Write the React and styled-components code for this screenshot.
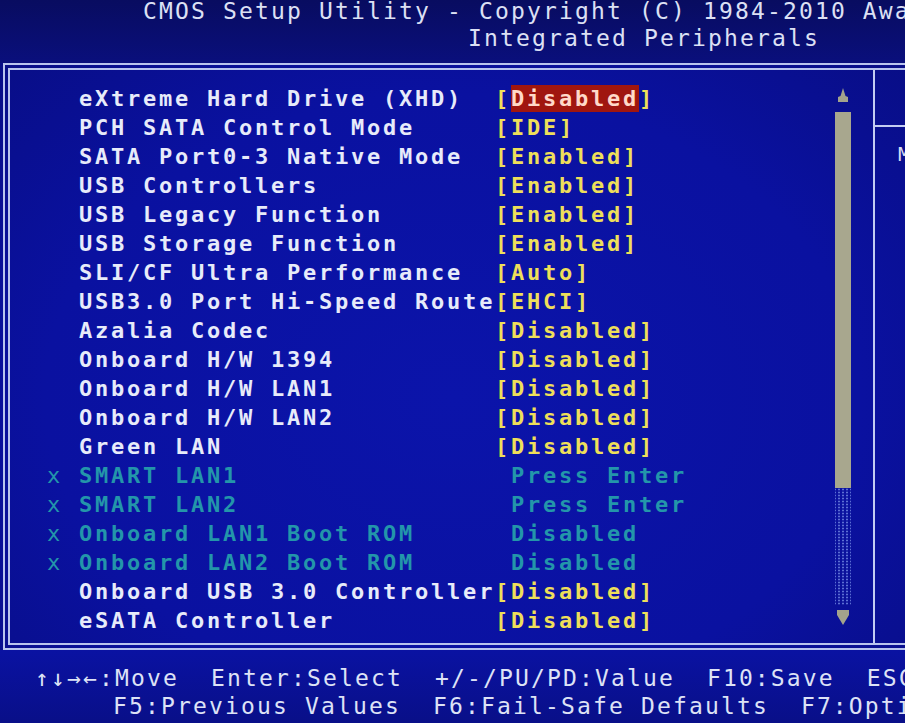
import React from 'react'
import styled, { createGlobalStyle } from 'styled-components'

const rows = [
  { label: 'eXtreme Hard Drive (XHD)', value: 'Disabled', selected: true },
  { label: 'PCH SATA Control Mode', value: 'IDE' },
  { label: 'SATA Port0-3 Native Mode', value: 'Enabled' },
  { label: 'USB Controllers', value: 'Enabled' },
  { label: 'USB Legacy Function', value: 'Enabled' },
  { label: 'USB Storage Function', value: 'Enabled' },
  { label: 'SLI/CF Ultra Performance', value: 'Auto' },
  { label: 'USB3.0 Port Hi-Speed Route', value: 'EHCI' },
  { label: 'Azalia Codec', value: 'Disabled' },
  { label: 'Onboard H/W 1394', value: 'Disabled' },
  { label: 'Onboard H/W LAN1', value: 'Disabled' },
  { label: 'Onboard H/W LAN2', value: 'Disabled' },
  { label: 'Green LAN', value: 'Disabled' },
  { label: 'SMART LAN1', value: 'Press Enter', locked: true },
  { label: 'SMART LAN2', value: 'Press Enter', locked: true },
  { label: 'Onboard LAN1 Boot ROM', value: 'Disabled', locked: true },
  { label: 'Onboard LAN2 Boot ROM', value: 'Disabled', locked: true },
  { label: 'Onboard USB 3.0 Controller', value: 'Disabled' },
  { label: 'eSATA Controller', value: 'Disabled' },
]

const GlobalStyle = createGlobalStyle`
  html, body {
    margin: 0;
    padding: 0;
    overflow: hidden;
    background: #0a12a0;
  }
`

const Screen = styled.div`
  width: 905px;
  height: 723px;
  overflow: hidden;
  display: flex;
  flex-direction: column;
  background: radial-gradient(ellipse 75% 70% at 50% 55%, #0b14aa 0%, #0a11a0 60%, #080d82 100%);
  font-family: "DejaVu Sans Mono", "Liberation Mono", monospace;
`

const Header = styled.div`
  height: 63px;
  flex-shrink: 0;
  display: flex;
  flex-direction: column;
  background: linear-gradient(180deg, #080c60 0%, #0a0f7c 100%);
`

const ThinLine = styled.div`
  height: 27px;
  line-height: 27px;
  padding-left: ${(p) => p.indent}px;
  font-size: 23px;
  letter-spacing: 2.15px;
  color: #dce0f4;
  white-space: pre;
  &:first-child {
    margin-top: -2px;
  }
`

const Frame = styled.div`
  margin-left: 3px;
  width: 940px;
  height: 573px;
  flex-shrink: 0;
  border: 7px double #b9c4ee;
  display: flex;
`

const LeftPanel = styled.div`
  width: 863px;
  flex-shrink: 0;
  display: flex;
  border-right: 2px solid #c3ccf2;
`

const List = styled.div`
  flex: 1;
  padding: 14px 0 0 37px;
  display: flex;
  flex-direction: column;
`

const Row = styled.div`
  height: 29px;
  display: grid;
  grid-template-columns: 32px 416px 1fr;
  align-items: center;
  line-height: 29px;
  font-size: 22px;
  font-weight: bold;
  letter-spacing: 2.76px;
  white-space: pre;
`

const Marker = styled.span`
  color: #2396aa;
  font-weight: normal;
`

const Label = styled.span`
  color: ${(p) => (p.locked ? '#2396aa' : '#e7ebfa')};
`

const Value = styled.span`
  color: ${(p) => (p.locked ? '#2396aa' : '#eedf5a')};
  padding-left: ${(p) => (p.locked ? 16 : 0)}px;
`

const Highlight = styled.span`
  display: inline-block;
  height: 27px;
  line-height: 27px;
  background: #a0160f;
  color: #ffd9c9;
`

const Scroll = styled.div`
  width: 16px;
  margin: 18px 22px 18px 0;
  display: flex;
  flex-direction: column;
  align-items: center;
`

const Arrow = styled.svg`
  display: block;
  flex-shrink: 0;
`

const Thumb = styled.div`
  width: 16px;
  height: 376px;
  margin-top: 10px;
  background: #a8a78e;
`

const Track = styled.div`
  width: 16px;
  flex: 1;
  margin-bottom: 5px;
  background-image: radial-gradient(circle, #5c6fd4 0.9px, transparent 1.2px);
  background-size: 4px 3px;
  background-position: 2px 0;
`

const RightPanel = styled.div`
  flex: 1;
  display: flex;
  flex-direction: column;
`

const HelpTitle = styled.div`
  height: 55px;
  border-bottom: 2px solid #c3ccf2;
`

const HelpBody = styled.div`
  padding: 14px 0 0 23px;
  font-size: 20px;
  line-height: 26px;
  color: #d9def2;
  white-space: pre;
`

const Footer = styled.div`
  flex: 1;
  padding-top: 14px;
  display: flex;
  flex-direction: column;
  background: linear-gradient(180deg, #0a12a2 0%, #090f88 100%);
`

const FootLine = styled.div`
  height: 28px;
  line-height: 28px;
  padding-left: ${(p) => p.indent}px;
  font-size: 23px;
  letter-spacing: 2.15px;
  color: #dde2f6;
  white-space: pre;
`

const App = () => {
  return (
    <Screen>
      <GlobalStyle />
      <Header>
        <ThinLine indent={143}>CMOS Setup Utility - Copyright (C) 1984-2010 Award Software</ThinLine>
        <ThinLine indent={468}>Integrated Peripherals</ThinLine>
      </Header>
      <Frame>
        <LeftPanel>
          <List>
            {rows.map((r) => (
              <Row key={r.label}>
                <Marker>{r.locked ? 'x' : ''}</Marker>
                <Label locked={r.locked}>{r.label}</Label>
                <Value locked={r.locked}>
                  {r.locked ? (
                    r.value
                  ) : r.selected ? (
                    <>
                      [<Highlight>{r.value}</Highlight>]
                    </>
                  ) : (
                    `[${r.value}]`
                  )}
                </Value>
              </Row>
            ))}
          </List>
          <Scroll>
            <Arrow width="14" height="14" viewBox="0 0 14 14">
              <polygon points="7,0 9.5,8 12,9 12,14 2,14 2,9 4.5,8" fill="#a3a38c" />
            </Arrow>
            <Thumb />
            <Track />
            <Arrow width="14" height="15" viewBox="0 0 14 15">
              <polygon points="1,0 13,0 13,5 7,15 1,5" fill="#a3a38c" />
            </Arrow>
          </Scroll>
        </LeftPanel>
        <RightPanel>
          <HelpTitle />
          <HelpBody>Menu Level  ►</HelpBody>
        </RightPanel>
      </Frame>
      <Footer>
        <FootLine indent={35}>↑↓→←:Move  Enter:Select  +/-/PU/PD:Value  F10:Save  ESC:Exit  F1:General Help</FootLine>
        <FootLine indent={113}>F5:Previous Values  F6:Fail-Safe Defaults  F7:Optimized Defaults</FootLine>
      </Footer>
    </Screen>
  )
}

export default App
